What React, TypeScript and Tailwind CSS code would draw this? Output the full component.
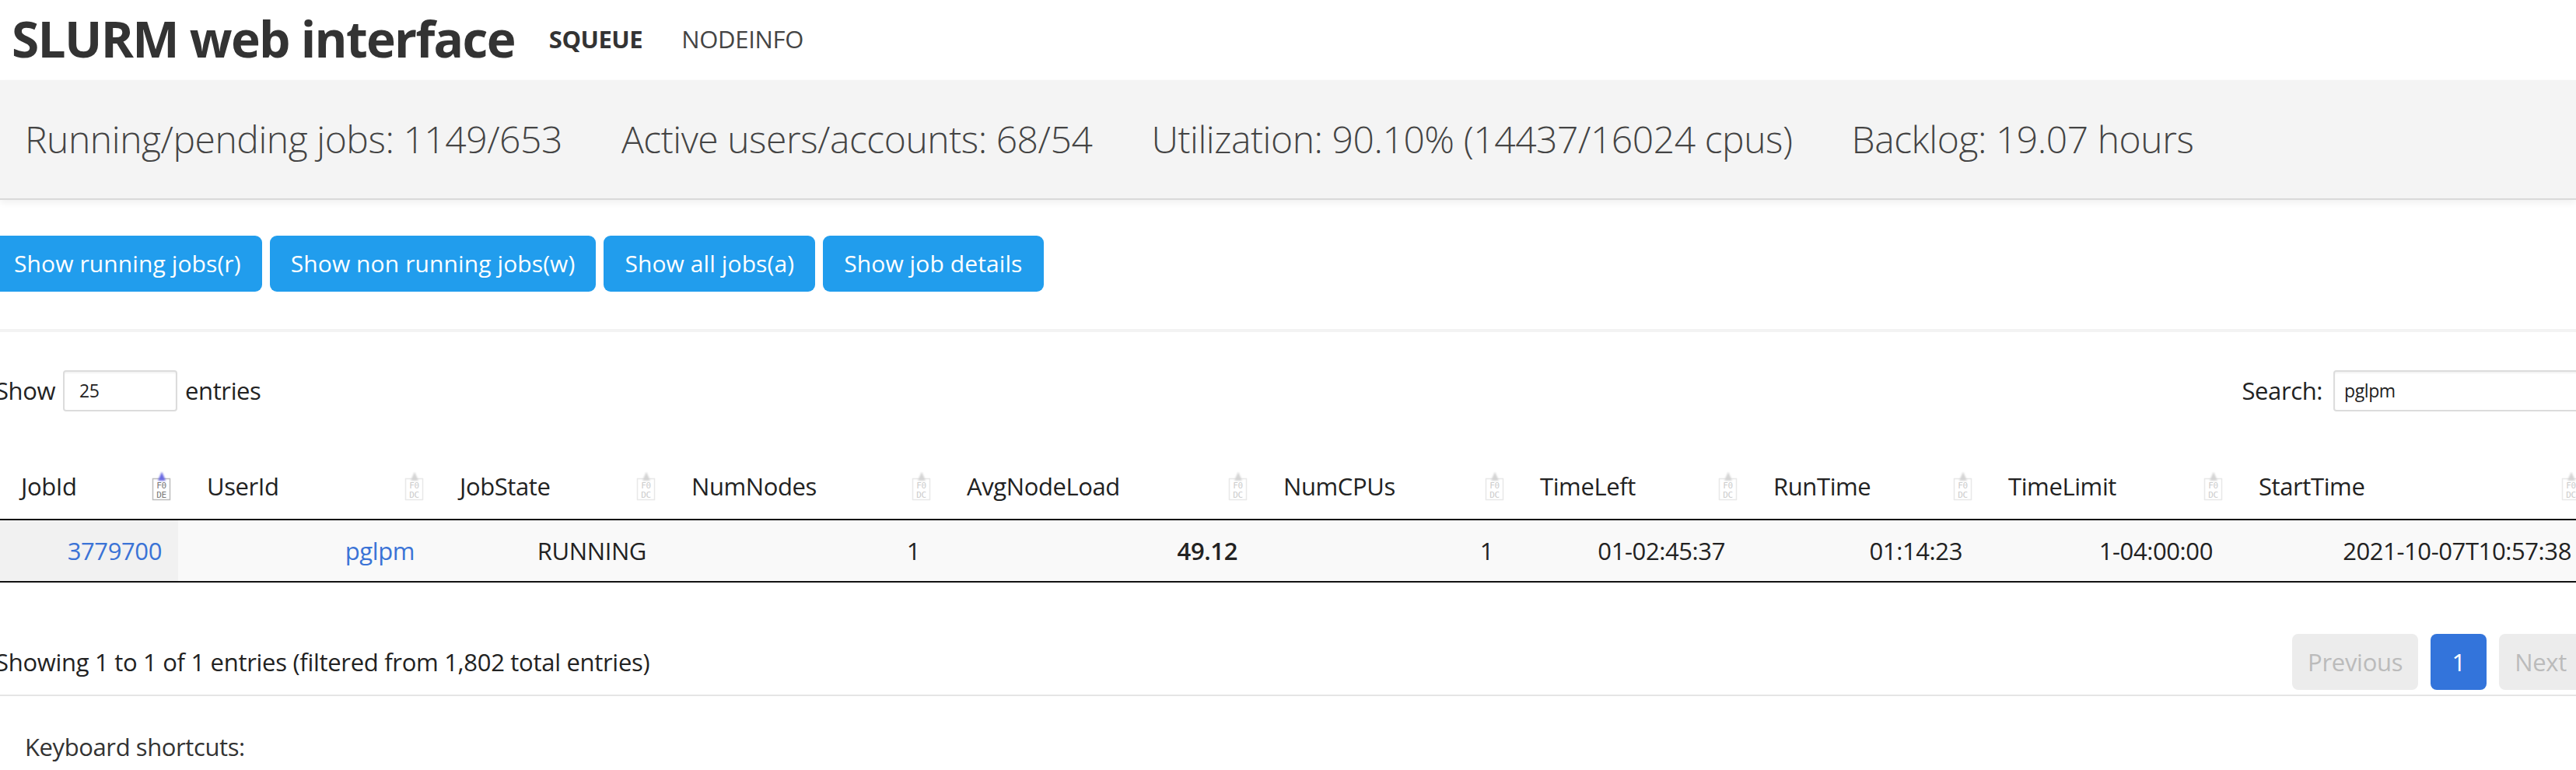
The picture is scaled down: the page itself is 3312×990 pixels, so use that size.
import React from "react";

function SortIcon({ active }: { active?: boolean }) {
  const tri = active ? "#6a6ae2" : "#d4d4d4";
  const box = active ? "#bdbdbd" : "#e8e8e8";
  const txt = active ? "#777777" : "#cccccc";
  const fid = active ? "blurA" : "blurB";
  return (
    <svg width="25" height="38" viewBox="0 0 25 38" className="shrink-0">
      <defs>
        <filter id={fid} x="-50%" y="-50%" width="200%" height="200%">
          <feGaussianBlur stdDeviation="0.9" />
        </filter>
      </defs>
      <rect x="1.5" y="9.5" width="22" height="27" fill="none" stroke={box} strokeWidth="1.5" />
      <text x="12.5" y="21.5" textAnchor="middle" fontSize="11" fontFamily="DejaVu Sans Mono, monospace" fill={txt}>
        F0
      </text>
      <text x="12.5" y="33.5" textAnchor="middle" fontSize="11" fontFamily="DejaVu Sans Mono, monospace" fill={txt}>
        {active ? "DE" : "DC"}
      </text>
      <polygon points="13,0.5 8,12 18,12" fill={tri} filter={`url(#${fid})`} />
    </svg>
  );
}

const columns = [
  { name: "JobId", w: "w-[239px]" },
  { name: "UserId", w: "w-[325px]" },
  { name: "JobState", w: "w-[298px]" },
  { name: "NumNodes", w: "w-[354px]" },
  { name: "AvgNodeLoad", w: "w-[407px]" },
  { name: "NumCPUs", w: "w-[330px]" },
  { name: "TimeLeft", w: "w-[300px]" },
  { name: "RunTime", w: "w-[302px]" },
  { name: "TimeLimit", w: "w-[322px]" },
  { name: "StartTime", w: "w-[460px]" },
];

export default function App() {
  return (
    <div className="w-[3312px] h-[990px] overflow-hidden bg-white text-[#222] font-['Open_Sans','Noto_Sans',sans-serif]">
      {/* Navbar */}
      <div className="h-[103px] flex items-center pl-[15px] pb-[4px]">
        <h1 className="text-[64px] font-bold text-[#333] leading-none tracking-[-1.7px]">SLURM web interface</h1>
        <nav className="flex items-center gap-[50px] ml-[44px] text-[31px] leading-none pt-[2px]">
          <span className="font-bold text-[#333] tracking-[-0.5px]">SQUEUE</span>
          <span className="text-[#444] tracking-[-0.3px]">NODEINFO</span>
        </nav>
      </div>

      {/* Stats band */}
      <div className="h-[154px] bg-[#f4f4f4] border-b-2 border-[#d9d9d9] shadow-[0_4px_8px_rgba(0,0,0,0.06)] flex items-center pl-[32px] gap-[76px] text-[48px] font-light text-[#444] tracking-[-0.45px]">
        <span>Running/pending jobs: 1149/653</span>
        <span>Active users/accounts: 68/54</span>
        <span>Utilization: 90.10% (14437/16024 cpus)</span>
        <span>Backlog: 19.07 hours</span>
      </div>

      {/* Main section (slightly scrolled left) */}
      <div className="-ml-[10px] w-[3337px]">
        <div className="flex gap-[10px] mt-[46px] pl-[1px]">
          {["Show running jobs(r)", "Show non running jobs(w)", "Show all jobs(a)", "Show job details"].map((t) => (
            <button
              key={t}
              className="h-[72px] px-[27px] rounded-[9px] bg-[#219ded] text-white text-[30px] tracking-[0.1px] leading-none"
            >
              {t}
            </button>
          ))}
        </div>

        <div className="h-[4px] bg-[#f3f3f3] mt-[48px] ml-[10px]" />

        {/* Controls */}
        <div className="flex items-center justify-between mt-[49px] h-[53px] text-[31px] tracking-[-0.4px]">
          <div className="flex items-center pl-[4px]">
            <span>Show</span>
            <div className="ml-[10px] w-[147px] h-[53px] border-2 border-[#dcdcdc] rounded-[4px] shadow-[inset_0_2px_2px_rgba(0,0,0,0.05)] flex items-center pl-[19px] text-[23px]">
              25
            </div>
            <span className="ml-[10px]">entries</span>
          </div>
          <div className="flex items-center">
            <span>Search:</span>
            <div className="ml-[14px] w-[327px] h-[53px] border-2 border-[#dcdcdc] rounded-[4px] shadow-[inset_0_2px_2px_rgba(0,0,0,0.05)] flex items-center pl-[12px] text-[23px]">
              pglpm
            </div>
          </div>
        </div>

        {/* Table */}
        <table className="table-fixed border-collapse mt-[54px] w-[3337px] text-[31px] tracking-[-0.4px]">
          <thead>
            <tr>
              {columns.map((c, i) => (
                <th key={c.name} className={`${c.w} p-0 font-normal text-left`}>
                  <div className="flex items-center justify-between pl-[37px] pr-[9px] h-[84px]">
                    <span>{c.name}</span>
                    <SortIcon active={i === 0} />
                  </div>
                </th>
              ))}
            </tr>
          </thead>
          <tbody>
            <tr className="border-y-2 border-[#111] bg-[#f9f9f9] h-[80px] text-right">
              <td className="bg-[#f1f1f1] pr-[21px] text-[#3a73d6]">3779700</td>
              <td className="pr-[21px] text-[#3a73d6]">pglpm</td>
              <td className="pr-[21px]">RUNNING</td>
              <td className="pr-[23px]">1</td>
              <td className="pr-[22px] font-semibold">49.12</td>
              <td className="pr-[23px]">1</td>
              <td className="pr-[25px]">01-02:45:37</td>
              <td className="pr-[22px]">01:14:23</td>
              <td className="pr-[22px]">1-04:00:00</td>
              <td className="pr-[21px]">2021-10-07T10:57:38</td>
            </tr>
          </tbody>
        </table>

        {/* Footer: info + pagination */}
        <div className="flex items-center justify-between mt-[66px] h-[72px] text-[31px] tracking-[-0.3px]">
          <span className="pl-[4px]">Showing 1 to 1 of 1 entries (filtered from 1,802 total entries)</span>
          <div className="flex gap-[16px] pr-[7px]">
            <span className="h-[72px] px-[20px] rounded-[8px] bg-[#ececec] text-[#bbbbbb] flex items-center">Previous</span>
            <span className="h-[72px] w-[72px] rounded-[8px] bg-[#3374db] text-white flex items-center justify-center">1</span>
            <span className="h-[72px] px-[20px] rounded-[8px] bg-[#ececec] text-[#bbbbbb] flex items-center">Next</span>
          </div>
        </div>
      </div>

      <div className="h-[2px] bg-[#e5e5e5] mt-[6px]" />

      <div className="pl-[32px] pt-[50px] text-[31px] text-[#333] tracking-[-0.4px] leading-none">Keyboard shortcuts:</div>
    </div>
  );
}
